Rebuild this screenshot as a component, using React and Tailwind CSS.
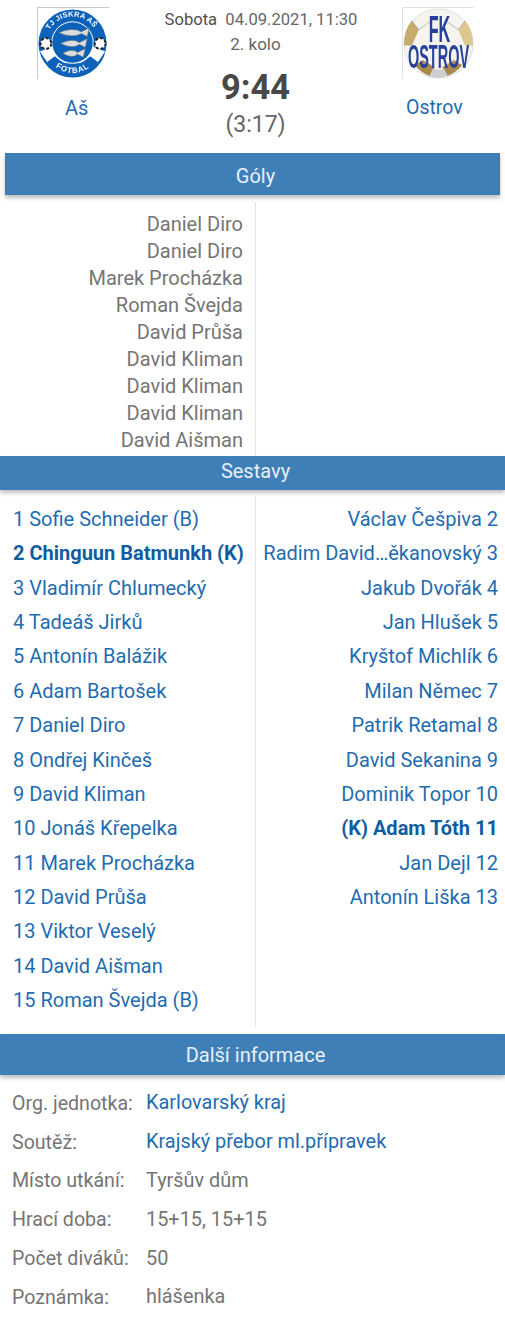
import React from 'react';

const goals = ['Daniel Diro', 'Daniel Diro', 'Marek Procházka', 'Roman Švejda', 'David Průša', 'David Kliman', 'David Kliman', 'David Kliman', 'David Aišman'];

const home = [
  '1 Sofie Schneider (B)', '2 Chinguun Batmunkh (K)', '3 Vladimír Chlumecký', '4 Tadeáš Jirků', '5 Antonín Balážik',
  '6 Adam Bartošek', '7 Daniel Diro', '8 Ondřej Kinčeš', '9 David Kliman', '10 Jonáš Křepelka',
  '11 Marek Procházka', '12 David Průša', '13 Viktor Veselý', '14 David Aišman', '15 Roman Švejda (B)',
];

const away = [
  'Václav Češpiva 2', 'Radim David…ěkanovský 3', 'Jakub Dvořák 4', 'Jan Hlušek 5', 'Kryštof Michlík 6',
  'Milan Němec 7', 'Patrik Retamal 8', 'David Sekanina 9', 'Dominik Topor 10', '(K) Adam Tóth 11',
  'Jan Dejl 12', 'Antonín Liška 13',
];

const info = [
  ['Org. jednotka:', 'Karlovarský kraj', true],
  ['Soutěž:', 'Krajský přebor ml.přípravek', true],
  ['Místo utkání:', 'Tyršův dům', false],
  ['Hrací doba:', '15+15, 15+15', false],
  ['Počet diváků:', '50', false],
  ['Poznámka:', 'hlášenka', false],
];

function Fish({ y, w }) {
  return (
    <g transform={`translate(35 ${y})`}>
      <path d={`M${-w} 0 Q0 -6 ${w - 5} -1 L${w + 3} -5 L${w + 1} 4 L${w - 5} 1 Q0 6 ${-w} 0Z`} fill="#d9dde0" stroke="#56606b" strokeWidth="0.6" />
    </g>
  );
}

function AsLogo() {
  return (
    <div className="w-[72px] h-[72px] border-l border-t border-[#c8c8c8]">
      <svg viewBox="0 0 72 72" className="w-[71px] h-[71px] blur-[0.4px]">
        <circle cx="35" cy="36" r="34.5" fill="#0b62b8" />
        <path d="M2 44 L16 38 Q35 62 54 38 L68 44 L60 56 L10 56Z" fill="#fff" />
        <path d="M9 55 Q35 84 61 55 L53 49 Q35 66 17 49Z" fill="#0b62b8" />
        <circle cx="35" cy="35" r="21" fill="#0b62b8" stroke="#fff" strokeWidth="1" />
        <Fish y={25} w={14} />
        <Fish y={36} w={12} />
        <Fish y={46} w={10} />
        <circle cx="8" cy="36" r="5.5" fill="#fff" stroke="#222" strokeWidth="2" strokeDasharray="3 2" />
        <circle cx="63" cy="36" r="5.5" fill="#fff" stroke="#222" strokeWidth="2" strokeDasharray="3 2" />
        <path id="asTop" d="M9 30 A26.5 26.5 0 0 1 61 30" fill="none" />
        <text fontFamily="'Liberation Sans', sans-serif" fontSize="7.5" fontWeight="700" fill="#fff" letterSpacing="0.3">
          <textPath href="#asTop" startOffset="8">TJ JISKRA AŠ</textPath>
        </text>
        <path id="asBottom" d="M13 56 Q35 76 58 56" fill="none" />
        <text fontFamily="'Liberation Sans', sans-serif" fontSize="8" fontWeight="700" fill="#fff" letterSpacing="0.8">
          <textPath href="#asBottom" startOffset="6">FOTBAL</textPath>
        </text>
      </svg>
    </div>
  );
}

function OstrovLogo() {
  return (
    <div className="w-[72px] h-[72px] border-l border-t border-[#e2e2e2]">
      <svg viewBox="0 0 72 72" className="w-[71px] h-[71px] blur-[0.4px]">
        <circle cx="36" cy="36" r="35" fill="#f6f4ee" stroke="#dedede" />
        <path d="M1 38 Q1 22 9 13 L16 22 L9 38Z" fill="#c7ab6c" />
        <path d="M71 38 Q71 22 63 13 L56 22 L63 38Z" fill="#dcc88c" />
        <path d="M12 58 Q19 66 27 69 L32 60 L20 53Z" fill="#a98a4c" />
        <path d="M60 58 Q53 66 45 69 L40 60 L52 53Z" fill="#a98a4c" />
        <path d="M27 69 Q36 73 45 69 L42 62 L30 62Z" fill="#cfcfcf" />
        <path d="M16 22 L30 12 M56 22 L42 12 M9 13 L16 22 M63 13 L56 22 M20 53 L32 60 M52 53 L40 60" fill="none" stroke="#a5a5a5" strokeWidth="0.8" />
        <text x="26" y="35" textLength="22" lengthAdjust="spacingAndGlyphs" fontFamily="'Liberation Sans', sans-serif" fontSize="38" fontWeight="700" fill="#27409a">FK</text>
        <text x="5" y="61" textLength="62" lengthAdjust="spacingAndGlyphs" fontFamily="'Liberation Sans', sans-serif" fontSize="34" fontWeight="700" fill="#27409a">OSTROV</text>
      </svg>
    </div>
  );
}

function SectionBar({ title, className }) {
  return (
    <div className={`flex items-center justify-center bg-[#3f7fb8] text-[#e8f0f7] text-[20px] shadow-[0_3px_4px_rgba(0,0,0,0.25)] ${className}`}>
      {title}
    </div>
  );
}

export default function App() {
  return (
    <div className="w-[505px] h-[1321px] bg-white overflow-hidden font-['Roboto','Noto_Sans',sans-serif]">
      {/* hlavička zápasu */}
      <header className="flex h-[153px] pt-[7px]">
        <div className="w-[153px] pl-[37px]">
          <AsLogo />
          <a className="block mt-[17px] ml-[28px] text-[20px] leading-[24px] text-[#1f6cb0]">Aš</a>
        </div>
        <div className="flex-1 flex flex-col items-center text-[#666]">
          <div className="ml-[11px] text-[16.6px] leading-[26px] whitespace-nowrap"><span className="text-[#505050]">Sobota</span>&nbsp; 04.09.2021, 11:30</div>
          <div className="text-[17px] leading-[22px]">2. kolo</div>
          <div className="text-[34.5px] leading-[40px] font-bold mt-[12px] text-[#484848]">9:44</div>
          <div className="text-[23px] leading-[28px] mt-[4px]">(3:17)</div>
        </div>
        <div className="w-[147px] pl-[44px]">
          <OstrovLogo />
          <a className="block mt-[17px] ml-[4px] text-[19.5px] leading-[24px] text-[#1f6cb0]">Ostrov</a>
        </div>
      </header>

      <div className="px-[5px]">
        <SectionBar title="Góly" className="h-[42px] pt-[3px] pl-[6px]" />
      </div>

      {/* góly */}
      <section className="grid grid-cols-[256px_1fr] mt-[7px] h-[254px]">
        <div className="border-r border-[#e4e4e4] pr-[12px] pt-[9px] text-right text-[#757575] text-[20px]">
          {goals.map((g, i) => (
            <div key={i} className="h-[27px] leading-[27px]">{g}</div>
          ))}
        </div>
        <div />
      </section>

      <SectionBar title="Sestavy" className="h-[34px] pb-[4px] pl-[6px] relative" />

      {/* sestavy */}
      <section className="grid grid-cols-[256px_1fr] mt-[7px] h-[530px]">
        <div className="border-r border-[#e4e4e4] pl-[13px] pt-[5px] text-[#1f6cb0] text-[20px]">
          {home.map((p, i) => (
            <div key={i} className={`h-[34.36px] leading-[34.36px] whitespace-nowrap ${i === 1 ? 'font-bold text-[#125d9f]' : ''}`}>{p}</div>
          ))}
        </div>
        <div className="pr-[7px] pt-[5px] text-right text-[#1f6cb0] text-[20px]">
          {away.map((p, i) => (
            <div key={i} className={`h-[34.36px] leading-[34.36px] whitespace-nowrap ${i === 9 ? 'font-bold text-[#125d9f]' : ''}`}>{p}</div>
          ))}
        </div>
      </section>

      <SectionBar title="Další informace" className="h-[41px] mt-[7px] pl-[6px]" />

      {/* další informace */}
      <section className="pl-[12px] pt-[9px] text-[19.9px]">
        {info.map(([label, value, link]) => (
          <div key={label} className="flex h-[38.8px] items-center">
            <span className="w-[134px] text-[19.6px] text-[#757575]">{label}</span>
            <span className={link ? 'text-[#1f6cb0]' : 'text-[#757575]'}>{value}</span>
          </div>
        ))}
      </section>
    </div>
  );
}
